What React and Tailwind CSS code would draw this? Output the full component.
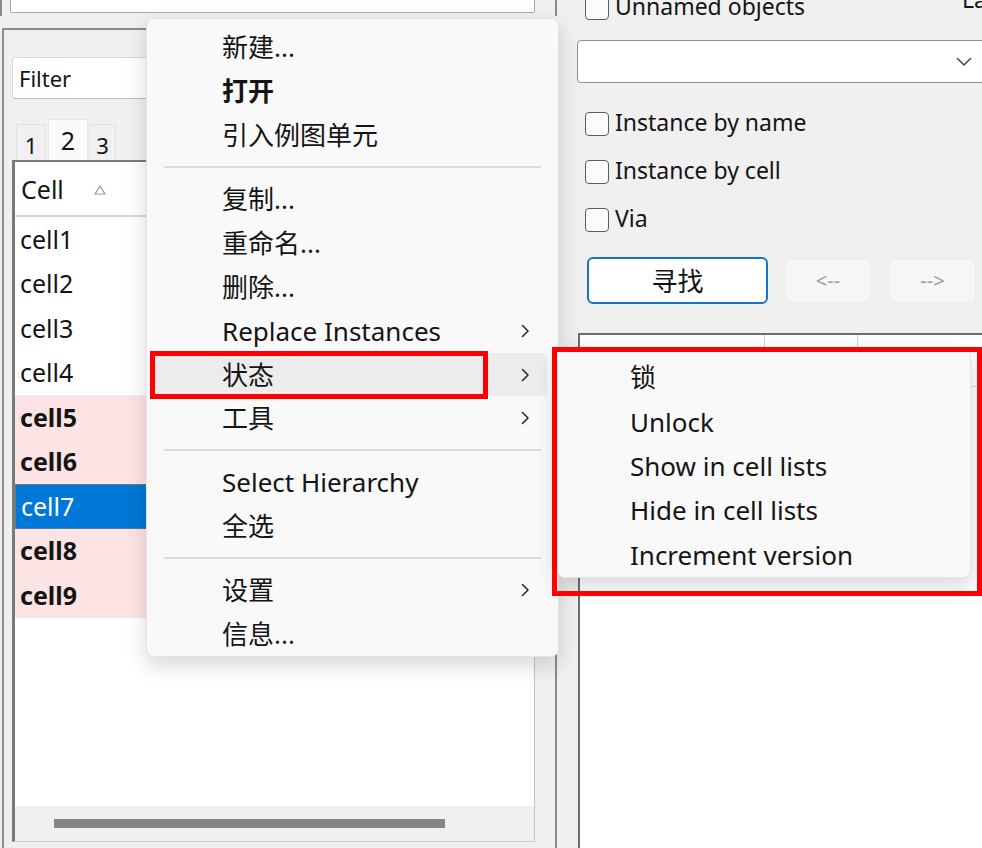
import React from "react";

const Chevron = () => (
  <svg width="10" height="16" viewBox="0 0 10 16" className="shrink-0">
    <path d="M2.5 2.5 L8 8 L2.5 13.5" fill="none" stroke="#2b2b2b" strokeWidth="1.6" strokeLinecap="round" strokeLinejoin="round" />
  </svg>
);

const Item = ({ label, bold, sub, hl }) => (
  <div
    className={`ml-[5px] mr-[11px] h-[44px] rounded-[5px] flex items-center pl-[70px] pr-[17px] ${hl ? "bg-[#ececec]" : ""}`}
  >
    <span className={`text-[26px] leading-none whitespace-nowrap text-[#141414] ${bold ? "font-bold" : ""}`}>{label}</span>
    {sub ? <span className="ml-auto flex items-center"><Chevron /></span> : null}
  </div>
);

const Sep = () => (
  <div className="h-[20px] flex items-center mx-[17px]">
    <div className="h-[2px] w-full bg-[#dcdcdc]" />
  </div>
);

const Check = ({ label }) => (
  <div className="flex items-center h-[24px]">
    <div className="w-[24px] h-[24px] rounded-[4px] border-[1.5px] border-[#5c5c5c] bg-[#fbfbfb] shrink-0" />
    <span className="ml-[6px] -mt-[4px] text-[23px] leading-none whitespace-nowrap text-[#141414]">{label}</span>
  </div>
);

const rows = [
  { t: "cell1" },
  { t: "cell2" },
  { t: "cell3" },
  { t: "cell4" },
  { t: "cell5", b: true },
  { t: "cell6", b: true },
  { t: "cell7", sel: true },
  { t: "cell8", b: true },
  { t: "cell9", b: true },
];

export default function App() {
  return (
    <div className="relative w-[982px] h-[848px] overflow-hidden bg-[#f0f0f0] text-[#141414] font-['Noto_Sans','Noto_Sans_CJK_SC',sans-serif] flex">
      {/* Left column */}
      <div className="w-[558px] shrink-0 flex flex-col">
        <div className="w-[557px] h-[16px] border-l-2 border-r-2 border-[#8a8a8a] pl-[8px]">
          <div className="w-[525px] h-[13px] bg-white border-x border-b border-[#a8a8a8] rounded-b-[2px]" />
        </div>
        <div className="mt-[12px] ml-[2px] w-[555px] flex-1 border-t-2 border-l-2 border-r-2 border-[#8c8c8c] flex flex-col">
          <div className="ml-[8px] mt-[27px] w-[523px] h-[42px] bg-white border border-[#dadada] border-b-[#bdbdbd] rounded-[3px] flex items-center pl-[6px]">
            <span className="text-[22px] leading-none">Filter</span>
          </div>
          <div className="ml-[12px] mt-[20px] h-[41px] flex items-end">
            <div className="w-[30px] h-[36px] border border-b-0 border-[#e2e2e2] bg-[#f0f0f0] flex items-center justify-center text-[22px] leading-none pt-[4px]">1</div>
            <div className="ml-[2px] w-[40px] h-[41px] border border-b-0 border-[#e6e6e6] bg-[#fafafa] flex items-center justify-center text-[25px] leading-none">2</div>
            <div className="ml-[1px] w-[27px] h-[36px] border border-b-0 border-[#e2e2e2] bg-[#f0f0f0] flex items-center justify-center text-[22px] leading-none pt-[4px]">3</div>
          </div>
          <div className="ml-[8px] w-[523px] h-[682px] border-t-2 border-l-[3px] border-[#7a7a7a] border-r border-r-[#c6c6c6] border-b border-b-[#d0d0d0] bg-white flex flex-col">
            <div className="h-[55px] border-b-2 border-[#d9d9d9] flex items-center pl-[6px] bg-white shrink-0">
              <span className="text-[25px] leading-none mt-[2px]">Cell</span>
              <svg width="12" height="10" viewBox="0 0 12 10" className="ml-[30px] mt-[2px]">
                <path d="M6 1 L11 9 L1 9 Z" fill="#ffffff" stroke="#9a9a9a" strokeWidth="1.2" />
              </svg>
            </div>
            {rows.map((r) => (
              <div
                key={r.t}
                className={`h-[44.5px] shrink-0 flex items-center pl-[5px] ${
                  r.sel
                    ? "bg-[#0078d7] text-white border border-dotted border-[#b8804a]"
                    : r.b
                    ? "bg-[#fde4e4] font-bold"
                    : "bg-white"
                }`}
              >
                <span className="text-[25px] leading-none">{r.t}</span>
              </div>
            ))}
            <div className="flex-1" />
            <div className="h-[35px] bg-[#f0f0f0] shrink-0 pt-[13px] pl-[39px]">
              <div className="w-[391px] h-[9px] bg-[#858585]" />
            </div>
          </div>
        </div>
      </div>

      {/* Right column */}
      <div className="flex-1 flex flex-col pl-[19px] overflow-hidden">
        <div className="-mt-[4px] h-[24px] flex items-start pl-[8px]">
          <Check label="Unnamed objects" />
          <div className="ml-auto w-[20px] overflow-hidden whitespace-nowrap text-[23px] leading-none -mt-[8px]">Layer</div>
        </div>
        <div className="mt-[20px] w-[420px] h-[43px] shrink-0 bg-white border-[1.5px] border-[#8f8f8f] rounded-[4px] flex items-center justify-end pr-[24px]">
          <svg width="16" height="10" viewBox="0 0 16 10">
            <path d="M1.5 1.5 L8 8 L14.5 1.5" fill="none" stroke="#444" strokeWidth="1.5" strokeLinecap="round" strokeLinejoin="round" />
          </svg>
        </div>
        <div className="mt-[29px] pl-[8px]"><Check label="Instance by name" /></div>
        <div className="mt-[24px] pl-[8px]"><Check label="Instance by cell" /></div>
        <div className="mt-[24px] pl-[8px]"><Check label="Via" /></div>
        <div className="mt-[25px] ml-[10px] flex items-center">
          <div className="w-[181px] h-[47px] bg-white border-2 border-[#1a73c8] rounded-[6px] flex items-center justify-center text-[26px] leading-none">寻找</div>
          <div className="ml-[17px] w-[86px] h-[44px] bg-[#f6f6f6] border border-[#ececec] rounded-[5px] flex items-center justify-center text-[20px] text-[#9c9c9c] leading-none">&lt;--</div>
          <div className="ml-[18px] w-[87px] h-[44px] bg-[#f6f6f6] border border-[#ececec] rounded-[5px] flex items-center justify-center text-[20px] text-[#9c9c9c] leading-none">--&gt;</div>
        </div>
        <div className="mt-[29px] ml-[1px] w-[420px] flex-1 bg-white border-t-2 border-l-2 border-[#6e6e6e] flex flex-col">
          <div className="h-[52px] flex border-b border-[#d6d6d6] shrink-0">
            <div className="w-[185px] border-r border-[#cfcfcf]" />
            <div className="w-[93px] border-r border-[#cfcfcf]" />
            <div className="flex-1" />
          </div>
        </div>
      </div>

      {/* Main context menu */}
      <div className="absolute left-[146px] top-[18px] w-[413px] h-[639px] rounded-[8px] bg-[#f9f9f9] border border-[#e4e4e4] shadow-[0_8px_22px_rgba(0,0,0,0.16)] pt-[6px] flex flex-col">
        <Item label="新建..." />
        <Item label="打开" bold />
        <Item label="引入例图单元" />
        <Sep />
        <Item label="复制..." />
        <Item label="重命名..." />
        <Item label="删除..." />
        <Item label="Replace Instances" sub />
        <Item label="状态" sub hl />
        <Item label="工具" sub />
        <Sep />
        <Item label="Select Hierarchy" />
        <Item label="全选" />
        <Sep />
        <Item label="设置" sub />
        <Item label="信息..." />
      </div>

      {/* Submenu */}
      <div className="absolute left-[557px] top-[348px] w-[414px] h-[230px] rounded-[8px] bg-[#f9f9f9] border border-[#e4e4e4] shadow-[0_8px_22px_rgba(0,0,0,0.16)] pt-[6px] flex flex-col">
        {["锁", "Unlock", "Show in cell lists", "Hide in cell lists", "Increment version"].map((t) => (
          <div key={t} className="h-[44.5px] flex items-center pl-[72px]">
            <span className="text-[26px] leading-none whitespace-nowrap">{t}</span>
          </div>
        ))}
      </div>

      {/* Red annotation boxes */}
      <div className="absolute left-[150px] top-[351px] w-[338px] h-[48px] border-[5px] border-[#ff0000]" />
      <div className="absolute left-[552px] top-[347px] w-[430px] h-[249px] border-[5px] border-[#ff0000]" />
    </div>
  );
}
